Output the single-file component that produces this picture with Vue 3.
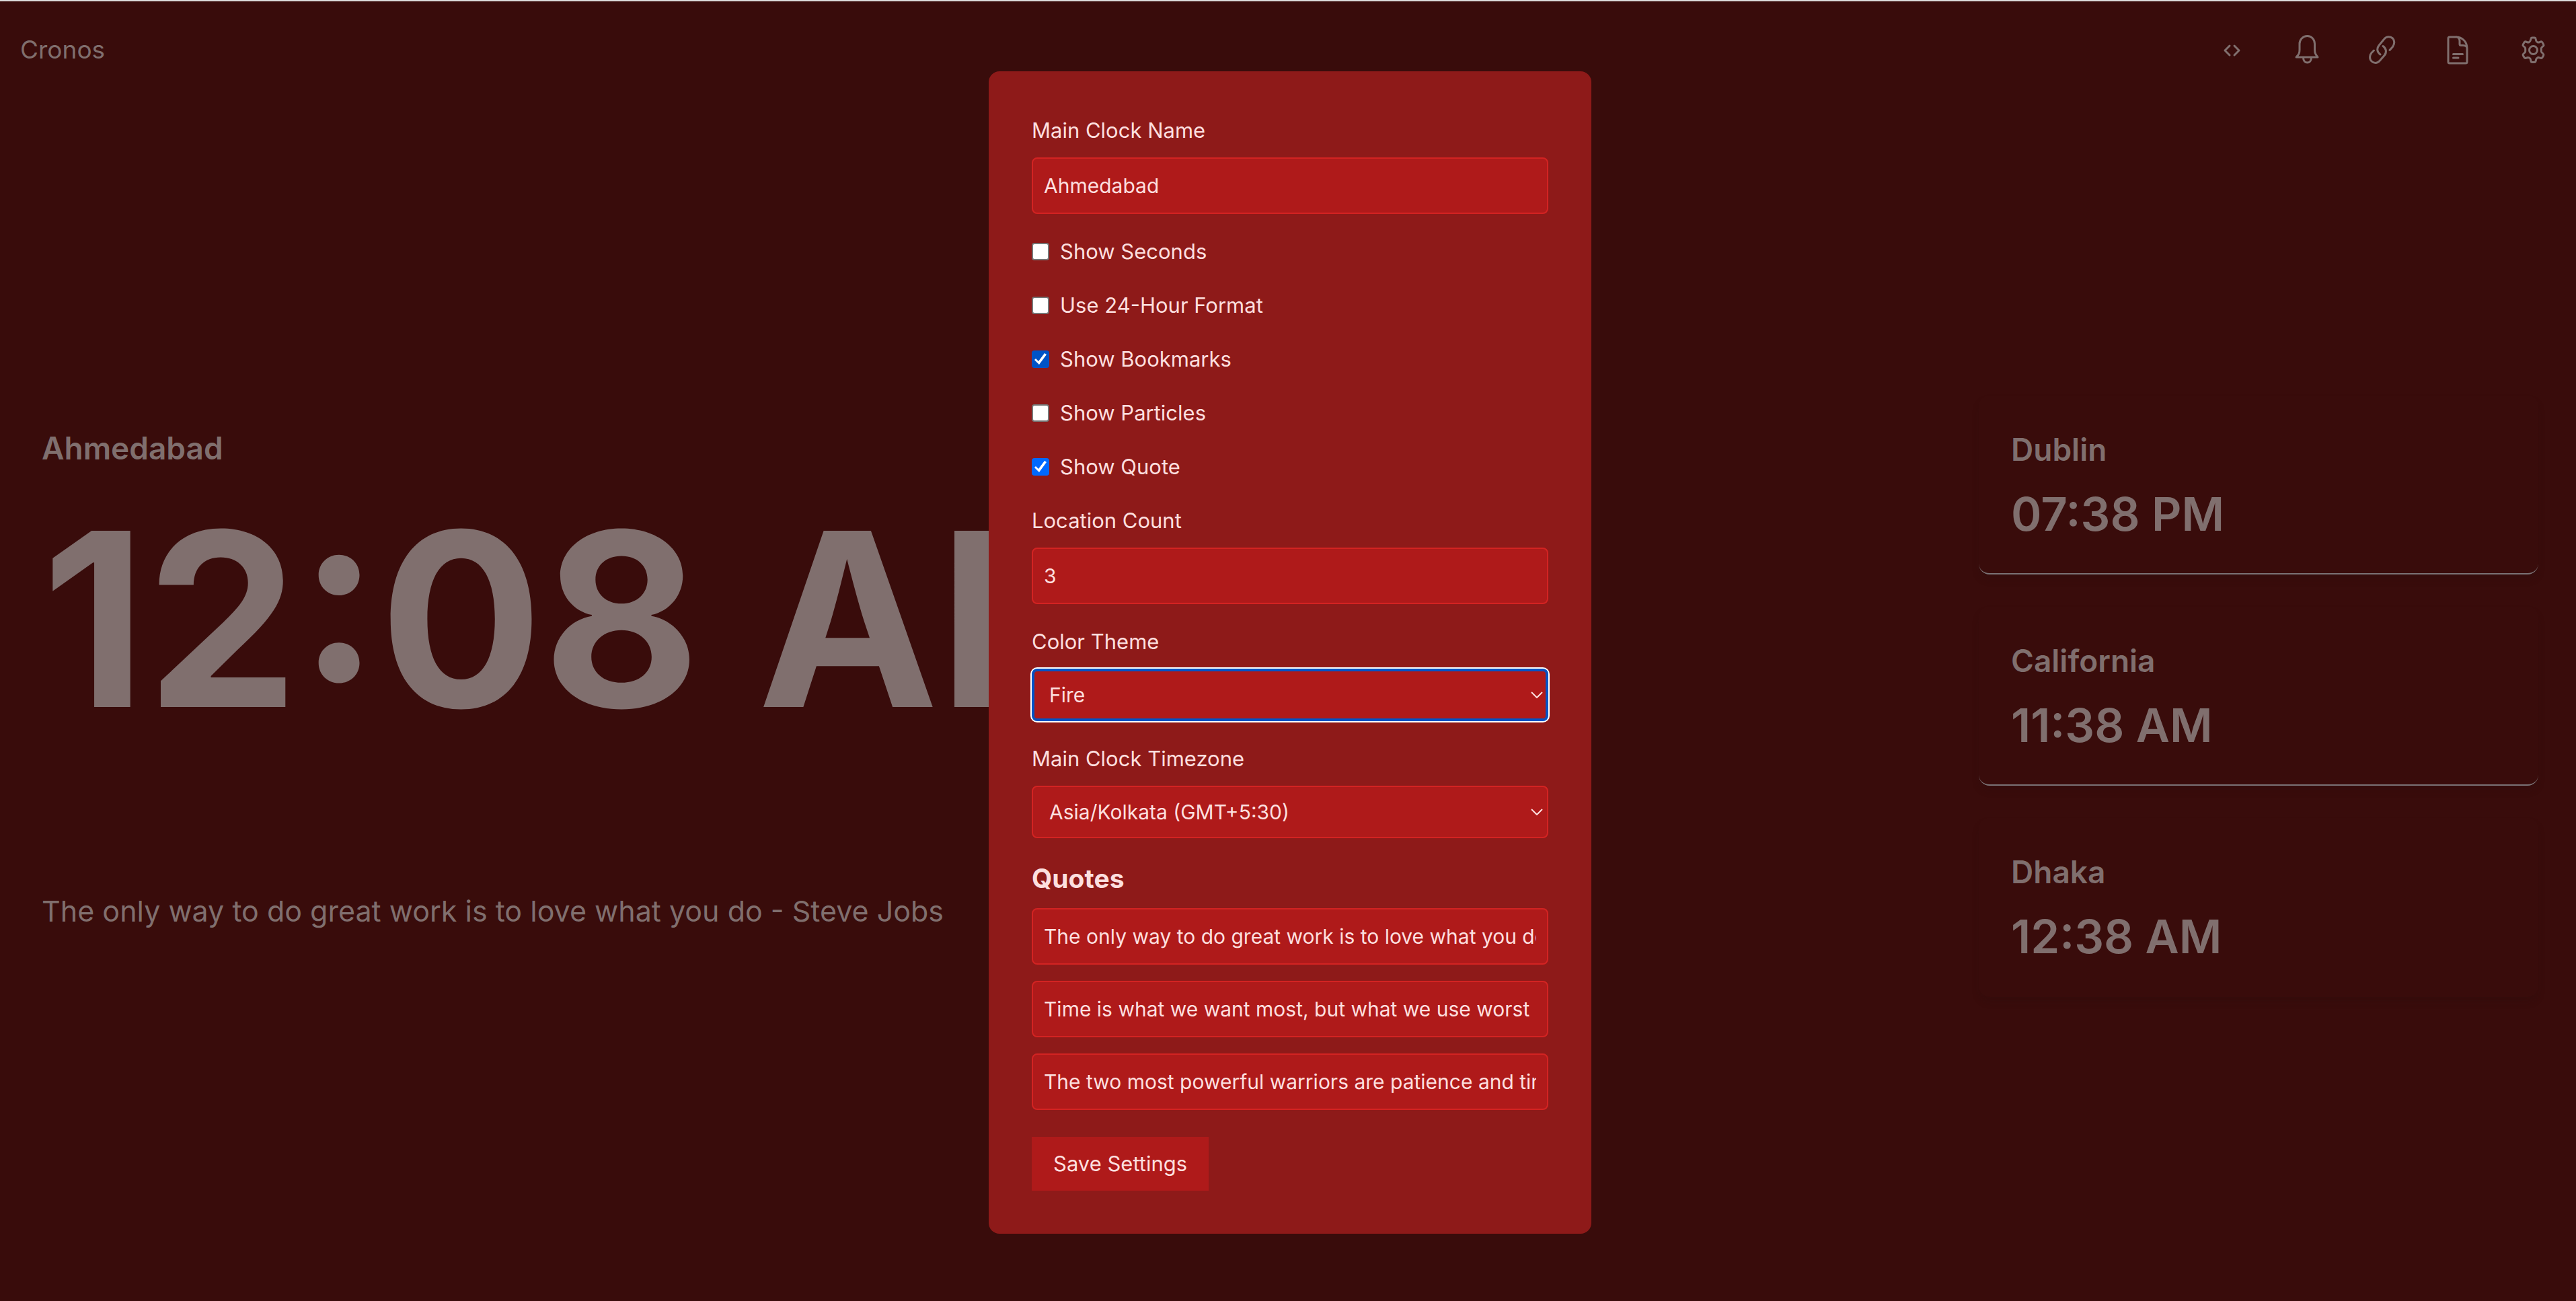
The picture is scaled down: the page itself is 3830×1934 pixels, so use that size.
<script setup>
import { ref } from 'vue'

const clocks = [
  { name: 'Dublin', time: '07:38 PM' },
  { name: 'California', time: '11:38 AM' },
  { name: 'Dhaka', time: '12:38 AM' },
]
const toggles = ref([
  { id: 'seconds', label: 'Show Seconds', on: false },
  { id: 'hour24', label: 'Use 24-Hour Format', on: false },
  { id: 'bookmarks', label: 'Show Bookmarks', on: true, pressed: true },
  { id: 'particles', label: 'Show Particles', on: false },
  { id: 'quote', label: 'Show Quote', on: true },
])
const clockName = ref('Ahmedabad')
const count = ref('3')
const theme = ref('Fire')
const zone = ref('Asia/Kolkata (GMT+5:30)')
const quotes = ref([
  'The only way to do great work is to love what you do - Steve Jobs',
  'Time is what we want most, but what we use worst - William Penn',
  'The two most powerful warriors are patience and time - Leo Tolstoy',
])
</script>

<template>
  <div class="page">
    <header class="bar">
      <a class="brand" href="#">Cronos</a>
      <nav class="tools">
        <button type="button" class="tool" aria-label="Embed code">
          <svg viewBox="0 0 48 48"><path d="M21 18l-7 7 7 7M28 18l7 7-7 7" /></svg>
        </button>
        <button type="button" class="tool" aria-label="Alarms">
          <svg viewBox="0 0 48 48"><path d="M8 35C12 31 13 29 13 24V15C13 9 18 3.500 24.500 3.500S35.500 9 35.500 15V24C35.500 29 37 31 40 35ZM18.500 35.500C18.500 40 21 43 24.500 43S30.500 40 30.500 35.500" /></svg>
        </button>
        <button type="button" class="tool" aria-label="Bookmarks">
          <svg viewBox="0 0 48 48"><path d="M25 18.500C30 22 31 28 27 32.500L20 40.500C16.500 44.500 11.500 44.500 8 41C4.500 37.500 5 32 8 28.500L11.500 25" /><path d="M21 31C16 27.500 15.500 22 19 17.500L26 9C29.500 4 35.500 3.500 39.500 7C43 11 42 15.500 39.500 19.500L35 24.500" /></svg>
        </button>
        <button type="button" class="tool" aria-label="Notes">
          <svg viewBox="0 0 48 48"><path d="M21.500 5H12C10.500 5 10 5.500 10 7V42C10 43.500 10.500 44 12 44H36C37.500 44 38 43.500 38 42V22C38 12 31 5 21.500 5ZM22 5C26 5.500 27 8 27 11V15.500C27 17 27.500 17.500 29 17.500H32C36 17.500 38 19 38 22M17.500 30.500H31.500M17.500 36H25" /></svg>
        </button>
        <button type="button" class="tool" aria-label="Settings">
          <svg viewBox="0 0 48 48"><path d="M20.500 9.500L21 7.500Q21.300 6 22.800 6H26.200Q27.700 6 28 7.500L28.700 10.500Q29 11.700 30.500 12.500Q31.700 13.300 32.900 13L35.500 12Q37 11.500 37.800 12.800L39.700 16Q40.400 17.400 39.200 18.500L37 20.500Q36.200 21.300 36.300 22.500V26Q36.300 27 37.200 28L39.200 30Q40.400 31.200 39.700 32.500L37.800 35.600Q37 37 35.500 36.400L32.800 35.500Q31.700 35.100 30.600 36Q29 37 28.800 38L28 41Q27.700 42.500 26.200 42.500H22.800Q21.300 42.500 21 41L20.300 38Q20 36.900 18.500 36Q17.300 35.200 16.200 35.500L13.500 36.400Q12 37 11.200 35.600L9.300 32.500Q8.600 31.200 9.800 30L12 28Q12.700 27.200 12.700 26V22.500Q12.700 21.300 12 20.500L9.800 18.500Q8.600 17.400 9.300 16L11.200 12.800Q12 11.500 13.500 12L16.200 13Q17.300 13.300 18.500 12.500Q20 11.600 20.500 9.500Z" /><circle cx="24.500" cy="24.500" r="6" /></svg>
        </button>
      </nav>
    </header>

    <main class="board">
      <section class="primary">
        <h1 class="place">Ahmedabad</h1>
        <p class="big">12:08 AM</p>
        <p class="saying">The only way to do great work is to love what you do - Steve Jobs</p>
      </section>
      <section class="others">
        <article v-for="c in clocks" :key="c.name" class="card">
          <h2 class="place">{{ c.name }}</h2>
          <p class="time">{{ c.time }}</p>
        </article>
      </section>
    </main>

    <div class="overlay">
      <form class="dialog" @submit.prevent>
        <div class="field">
          <label for="clock-name">Main Clock Name</label>
          <input id="clock-name" v-model="clockName" class="control" type="text" />
        </div>
        <label v-for="t in toggles" :key="t.id" class="check" :for="t.id">
          <input :id="t.id" v-model="t.on" type="checkbox" :class="{ pressed: t.pressed }" />
          {{ t.label }}
        </label>
        <div class="field">
          <label for="count">Location Count</label>
          <input id="count" v-model="count" class="control" type="text" inputmode="numeric" />
        </div>
        <div class="field">
          <label for="theme">Color Theme</label>
          <div class="picker">
            <select id="theme" v-model="theme" class="control current">
              <option>Fire</option>
            </select>
            <svg class="chevron" viewBox="0 0 18 10"><path d="M1 1l8 8 8-8" /></svg>
          </div>
        </div>
        <div class="field">
          <label for="zone">Main Clock Timezone</label>
          <div class="picker">
            <select id="zone" v-model="zone" class="control">
              <option>Asia/Kolkata (GMT+5:30)</option>
            </select>
            <svg class="chevron" viewBox="0 0 18 10"><path d="M1 1l8 8 8-8" /></svg>
          </div>
        </div>
        <fieldset class="quotes">
          <legend>Quotes</legend>
          <input
            v-for="(q, i) in quotes"
            :key="i"
            v-model="quotes[i]"
            class="control"
            type="text"
            :aria-label="`Quote ${i + 1}`"
          />
        </fieldset>
        <button class="save" type="submit">Save Settings</button>
      </form>
    </div>
  </div>
</template>

<style>
body {
  margin: 0;
  background: #390c0b;
}
</style>

<style scoped>
* {
  box-sizing: border-box;
}
.page {
  position: relative;
  min-height: 100vh;
  border-top: 2px solid #dcdcdc;
  background: #390c0b;
  color: #806f6e;
  font-family: Inter, "Liberation Sans", sans-serif;
}
h1,
h2,
p {
  margin: 0;
}
.bar {
  display: flex;
  align-items: center;
  justify-content: space-between;
  height: 144px;
  padding: 0 40px 0 30px;
}
.brand {
  color: inherit;
  font-size: 37px;
  line-height: 56px;
  text-decoration: none;
}
.tools {
  display: flex;
  gap: 64px;
}
.tool {
  width: 48px;
  height: 48px;
  padding: 0;
  border: 0;
  background: none;
  color: inherit;
}
.tool svg {
  display: block;
  width: 48px;
  height: 48px;
  fill: none;
  stroke: currentColor;
  stroke-width: 3;
  stroke-linecap: round;
  stroke-linejoin: round;
}
.board {
  display: flex;
  justify-content: space-between;
  padding: 442px 56px 64px 62px;
}
.primary {
  padding-top: 46px;
}
.place {
  font-size: 46px;
  line-height: 64px;
  font-weight: 600;
}
.big {
  margin-top: 36px;
  font-size: 360px;
  line-height: 372px;
  font-weight: 700;
  white-space: nowrap;
}
.saying {
  margin-top: 216px;
  font-size: 43px;
  line-height: 64px;
}
.others {
  display: flex;
  flex-direction: column;
  gap: 48px;
  width: 832px;
}
.card {
  padding: 48px;
  border-bottom: 2px solid #7a7275;
  border-radius: 16px;
  box-shadow: 0 8px 12px -2px rgba(42, 14, 14, 0.3);
}
.card:last-child {
  border-bottom-color: transparent;
}
.time {
  margin-top: 24px;
  font-size: 69px;
  line-height: 80px;
  font-weight: 600;
}
.overlay {
  position: absolute;
  inset: 0;
  display: flex;
  align-items: center;
  justify-content: center;
  padding: 4px 0 0 6px;
}
.dialog {
  display: flex;
  flex-direction: column;
  gap: 32px;
  width: 896px;
  padding: 64px;
  border-radius: 16px;
  background: #8e1a19;
  color: #fddfdf;
  font-size: 31px;
  line-height: 48px;
}
.field {
  display: flex;
  flex-direction: column;
  gap: 16px;
}
.control {
  display: block;
  width: 100%;
  height: 84px;
  margin: 0;
  padding: 16px;
  border: 2px solid #d32322;
  border-radius: 8px;
  background: #af1a1a;
  color: inherit;
  font: inherit;
  font-size: 30px;
  outline: 0;
}
.picker {
  position: relative;
}
select.control {
  height: 78px;
  padding: 0 24px;
  appearance: none;
}
.current {
  border-color: #0053c6;
  box-shadow: 0 0 0 2px #ffffff, inset 0 0 0 2px #0053c6;
}
.chevron {
  position: absolute;
  top: 34px;
  right: 8px;
  width: 18px;
  height: 10px;
  fill: none;
  stroke: #fddfdf;
  stroke-width: 2;
}
.check {
  display: flex;
  align-items: center;
  gap: 16px;
}
.check input {
  flex: none;
  width: 26px;
  height: 26px;
  margin: 0;
  border: 2px solid #767676;
  border-radius: 4px;
  background: #ffffff;
  appearance: none;
}
.check input:checked {
  border: 0;
  background: #0069ff;
}
.check input.pressed:checked {
  background: #0053c6;
}
.check input:checked::before {
  content: "";
  display: block;
  width: 26px;
  height: 26px;
  background: #ffffff;
  clip-path: polygon(4px 14px, 6px 12px, 10px 16px, 19px 4px, 22px 6px, 11px 21px);
}
.quotes {
  display: flex;
  flex-direction: column;
  gap: 24px;
  min-width: 0;
  margin: 0;
  padding: 0;
  border: 0;
}
.quotes legend {
  margin-bottom: 16px;
  padding: 0;
  font-size: 39px;
  line-height: 56px;
  font-weight: 700;
}
.save {
  align-self: flex-start;
  height: 80px;
  margin-top: 8px;
  padding: 0 32px;
  border: 0;
  background: #af1a1a;
  color: inherit;
  font: inherit;
}
</style>
